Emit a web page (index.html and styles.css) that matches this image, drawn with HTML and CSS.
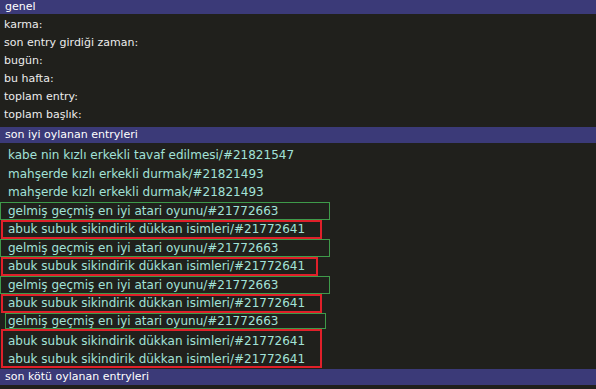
FILE: index.html
```html
<!DOCTYPE html>
<html>
<head>
    <meta charset="utf-8">
    <title>profil</title>
    <link rel="stylesheet" href="styles.css">
</head>
<body>
    <div class="panel">
        <div class="bar bar-top">genel</div>
        <ul class="stats">
            <li>karma:</li>
            <li>son entry girdiği zaman:</li>
            <li>bugün:</li>
            <li>bu hafta:</li>
            <li>toplam entry:</li>
            <li>toplam başlık:</li>
        </ul>
        <div class="bar">son iyi oylanan entryleri</div>
        <ul class="entries">
            <li class="entry">kabe nin kızlı erkekli tavaf edilmesi/#21821547</li>
            <li class="entry">mahşerde kızlı erkekli durmak/#21821493</li>
            <li class="entry">mahşerde kızlı erkekli durmak/#21821493</li>
            <li class="entry green">gelmiş geçmiş en iyi atari oyunu/#21772663</li>
            <li class="entry red">abuk subuk sikindirik dükkan isimleri/#21772641</li>
            <li class="entry green">gelmiş geçmiş en iyi atari oyunu/#21772663</li>
            <li class="entry red short">abuk subuk sikindirik dükkan isimleri/#21772641</li>
            <li class="entry green">gelmiş geçmiş en iyi atari oyunu/#21772663</li>
            <li class="entry red">abuk subuk sikindirik dükkan isimleri/#21772641</li>
            <li class="entry green inset">gelmiş geçmiş en iyi atari oyunu/#21772663</li>
            <li class="group red">
                <div class="entry">abuk subuk sikindirik dükkan isimleri/#21772641</div>
                <div class="entry">abuk subuk sikindirik dükkan isimleri/#21772641</div>
            </li>
        </ul>
        <div class="bar bar-bottom">son kötü oylanan entryleri</div>
    </div>
</body>
</html>
```

FILE: styles.css
```css
body {
    margin: 0;
    background-color: #20201c;
    font-family: "DejaVu Sans", Verdana, sans-serif;
}
.panel {
    width: 596px;
}
.bar {
    height: 16px;
    padding-left: 5px;
    background-color: #3b3a78;
    color: #ffffff;
    font-size: 11px;
    line-height: 16px;
}
.bar-top {
    height: 14px;
    line-height: 14px;
}
.bar-bottom {
    margin-top: 1px;
}
ul {
    list-style: none;
    margin: 0;
    padding: 0;
}
.stats {
    padding: 2px 0 3px 4px;
    color: #ececec;
    font-size: 11px;
}
.stats li {
    height: 18px;
    line-height: 18px;
}
.entries {
    padding-top: 3px;
    color: #a2e2d8;
    font-size: 12px;
}
.entry {
    box-sizing: border-box;
    height: 18.5px;
    display: flex;
    align-items: center;
    padding-left: 8px;
    white-space: nowrap;
}
.green {
    width: 330px;
    border: 1px solid #3e9a4a;
    padding-left: 7px;
}
.inset {
    width: 321px;
    height: 16px;
    margin-left: 5px;
    padding-left: 2px;
}
.red {
    width: 321px;
    margin-left: 1px;
    border: 2px solid #e0202a;
    padding-left: 5px;
}
.short {
    width: 317px;
}
.group {
    box-sizing: border-box;
    height: 39px;
    padding: 1px 0 0 0;
}
.group .entry {
    padding-left: 5px;
}
```
